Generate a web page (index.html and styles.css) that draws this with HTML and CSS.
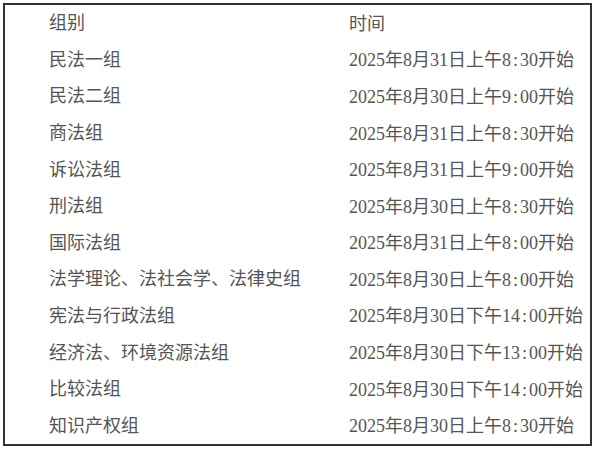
FILE: index.html
```html
<!DOCTYPE html>
<html lang="zh-CN">
<head>
<meta charset="utf-8">
<title>分组时间</title>
<link rel="stylesheet" href="styles.css">
</head>
<body>
<div class="box">
  <div class="row head"><div class="c1">组别</div><div class="c2">时间</div></div>
  <div class="row"><div class="c1">民法一组</div><div class="c2">2025年8月31日上午8<span class="colon">:</span>30开始</div></div>
  <div class="row"><div class="c1">民法二组</div><div class="c2">2025年8月30日上午9<span class="colon">:</span>00开始</div></div>
  <div class="row"><div class="c1">商法组</div><div class="c2">2025年8月31日上午8<span class="colon">:</span>30开始</div></div>
  <div class="row"><div class="c1">诉讼法组</div><div class="c2">2025年8月31日上午9<span class="colon">:</span>00开始</div></div>
  <div class="row"><div class="c1">刑法组</div><div class="c2">2025年8月30日上午8<span class="colon">:</span>30开始</div></div>
  <div class="row"><div class="c1">国际法组</div><div class="c2">2025年8月31日上午8<span class="colon">:</span>00开始</div></div>
  <div class="row"><div class="c1">法学理论、法社会学、法律史组</div><div class="c2">2025年8月30日上午8<span class="colon">:</span>00开始</div></div>
  <div class="row"><div class="c1">宪法与行政法组</div><div class="c2">2025年8月30日下午14<span class="colon">:</span>00开始</div></div>
  <div class="row"><div class="c1">经济法、环境资源法组</div><div class="c2">2025年8月30日下午13<span class="colon">:</span>00开始</div></div>
  <div class="row"><div class="c1">比较法组</div><div class="c2">2025年8月30日下午14<span class="colon">:</span>00开始</div></div>
  <div class="row"><div class="c1">知识产权组</div><div class="c2">2025年8月30日上午8<span class="colon">:</span>30开始</div></div>
</div>
</body>
</html>
```

FILE: styles.css
```css
html, body {
  margin: 0;
  padding: 0;
  background: #ffffff;
}
.box {
  box-sizing: border-box;
  margin: 3px 0 0 3px;
  width: 589px;
  height: 443px;
  border: 2px solid #333333;
  display: grid;
  grid-template-rows: repeat(12, 1fr);
  font-family: "Liberation Serif", "Noto Sans CJK SC", sans-serif;
  font-size: 18px;
  color: #555555;
}
.row {
  display: grid;
  grid-template-columns: 300px 1fr;
  align-items: center;
}
.c1, .c2 {
  padding-left: 44px;
  white-space: nowrap;
  line-height: 1;
}
.c2 {
  padding-top: 1px;
}
.colon {
  display: inline-block;
  width: 9px;
  text-align: center;
}
```
